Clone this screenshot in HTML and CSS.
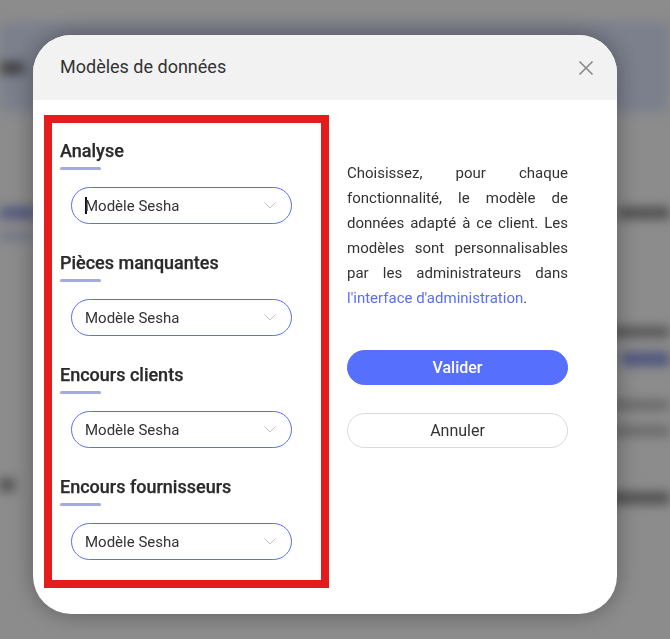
FILE: index.html
```html
<!DOCTYPE html>
<html>
<head>
    <title>Modèles de données</title>
    <link rel="stylesheet" href="styles.css">
</head>
<body>
    <div class="page">
        <div class="topbar"></div>
        <div class="band">
            <span class="band-text"></span>
        </div>
        <div class="content">
            <div class="col-left">
                <span class="line blue l1"></span>
                <span class="line lightblue l2"></span>
                <span class="line dark l3"></span>
            </div>
            <div class="col-right">
                <span class="line dark r1"></span>
                <span class="line dark r2"></span>
                <span class="line blue r3"></span>
                <span class="line grey r4"></span>
                <span class="line grey r5"></span>
                <span class="line dark r6"></span>
            </div>
        </div>
    </div>

    <div class="overlay"></div>

    <div class="modal">
        <div class="modal-header">
            <h2>Modèles de données</h2>
            <button class="close" aria-label="Fermer">
                <svg width="16" height="16" viewBox="0 0 16 16">
                    <path d="M1.5 1.5 L14.5 14.5 M14.5 1.5 L1.5 14.5" stroke="#888" stroke-width="1.6" fill="none"/>
                </svg>
            </button>
        </div>
        <div class="modal-body">
            <div class="models">
                <div class="model">
                    <h3>Analyse</h3>
                    <div class="select">
                        <span><span class="caret"></span>Modèle Sesha</span>
                        <svg class="chevron" width="12" height="7" viewBox="0 0 12 7"><path d="M0.5 0.5 L6 6 L11.5 0.5" stroke="#c2c2c2" stroke-width="1" fill="none"/></svg>
                    </div>
                </div>
                <div class="model">
                    <h3>Pièces manquantes</h3>
                    <div class="select">
                        <span>Modèle Sesha</span>
                        <svg class="chevron" width="12" height="7" viewBox="0 0 12 7"><path d="M0.5 0.5 L6 6 L11.5 0.5" stroke="#c2c2c2" stroke-width="1" fill="none"/></svg>
                    </div>
                </div>
                <div class="model">
                    <h3>Encours clients</h3>
                    <div class="select">
                        <span>Modèle Sesha</span>
                        <svg class="chevron" width="12" height="7" viewBox="0 0 12 7"><path d="M0.5 0.5 L6 6 L11.5 0.5" stroke="#c2c2c2" stroke-width="1" fill="none"/></svg>
                    </div>
                </div>
                <div class="model">
                    <h3>Encours fournisseurs</h3>
                    <div class="select">
                        <span>Modèle Sesha</span>
                        <svg class="chevron" width="12" height="7" viewBox="0 0 12 7"><path d="M0.5 0.5 L6 6 L11.5 0.5" stroke="#c2c2c2" stroke-width="1" fill="none"/></svg>
                    </div>
                </div>
            </div>

            <div class="side">
                <p>Choisissez, pour chaque fonctionnalité, le modèle de données adapté à ce client. Les modèles sont personnalisables par les administrateurs dans <a href="#">l'interface d'administration</a>.</p>
                <button class="btn primary">Valider</button>
                <button class="btn">Annuler</button>
            </div>
        </div>
    </div>
</body>
</html>
```

FILE: styles.css
```css
body {
    margin: 0;
    font-family: Roboto, "Liberation Sans", sans-serif;
    color: #333;
    background-color: #fff;
    overflow: hidden;
}

/* blurred page behind the dialog */
.page {
    height: 639px;
    filter: blur(6px);
}

.topbar {
    height: 22px;
    background-color: #fff;
}

.band {
    height: 90px;
    background-color: #e0e9ff;
    padding-top: 41px;
    box-sizing: border-box;
}

.band-text {
    display: block;
    width: 24px;
    height: 10px;
    background-color: #555;
}

.content {
    display: flex;
    justify-content: space-between;
}

.col-left,
.col-right {
    display: flex;
    flex-direction: column;
}

.col-left {
    width: 34px;
}

.col-right {
    width: 60px;
    align-items: flex-end;
}

.line {
    display: block;
    height: 8px;
}

.dark { background-color: #777; }
.grey { background-color: #aaa; }
.blue { background-color: #7d8be0; }
.lightblue { background-color: #b5c0f0; }

.l1 { margin-top: 96px; width: 36px; height: 10px; }
.l2 { margin-top: 15px; width: 32px; height: 6px; }
.l3 { margin-top: 240px; width: 14px; height: 12px; }

.r1 { margin-top: 96px; width: 52px; height: 10px; }
.r2 { margin-top: 110px; width: 60px; }
.r3 { margin-top: 17px; width: 48px; height: 12px; }
.r4 { margin-top: 36px; width: 60px; }
.r5 { margin-top: 18px; width: 60px; }
.r6 { margin-top: 58px; width: 60px; height: 10px; }

.overlay {
    position: fixed;
    inset: 0;
    background-color: rgba(0, 0, 0, 0.45);
}

/* dialog */
.modal {
    position: fixed;
    left: 33px;
    top: 35px;
    width: 584px;
    height: 579px;
    background-color: #fff;
    border-radius: 38px;
    overflow: hidden;
    box-shadow: 0px 0px 24px rgba(0, 0, 0, 0.35);
}

.modal-header {
    height: 65px;
    background-color: #f2f2f2;
    display: flex;
    align-items: center;
    justify-content: space-between;
    padding: 0 23px 0 27px;
}

.modal-header h2 {
    margin: 0;
    font-size: 18px;
    line-height: 20px;
    padding-bottom: 2px;
    font-weight: 400;
    color: #333;
}

.close {
    background: none;
    border: none;
    padding: 0;
    width: 16px;
    height: 16px;
    cursor: pointer;
}

.modal-body {
    display: flex;
    gap: 18px;
    padding: 15px 49px 26px 11px;
}

.models {
    width: 285px;
    height: 473px;
    box-sizing: border-box;
    border: 8px solid #e41c1c;
    padding: 17px 0 0 8px;
    display: flex;
    flex-direction: column;
    gap: 28px;
}

.model h3 {
    margin: 0;
    font-size: 18px;
    line-height: 21px;
    font-weight: 500;
    color: #2a2a2a;
    -webkit-text-stroke: 0.25px #2a2a2a;
}

.model h3::after {
    content: "";
    display: block;
    width: 41px;
    height: 3px;
    margin-top: 6px;
    border-radius: 2px;
    background-color: #a4abdf;
}

.select {
    margin: 17px 0 0 11px;
    width: 221px;
    height: 37px;
    box-sizing: border-box;
    border: 1px solid #5a6ff0;
    border-radius: 19px;
    display: flex;
    align-items: center;
    justify-content: space-between;
    padding: 0 15px 0 13px;
    font-size: 15px;
}

.caret {
    display: inline-block;
    width: 2px;
    height: 17px;
    background-color: #111;
    vertical-align: -3px;
    margin-right: -2px;
}

.side {
    width: 221px;
    padding-top: 46px;
    display: flex;
    flex-direction: column;
}

.side p {
    margin: 0;
    font-size: 15px;
    line-height: 25px;
    text-align: justify;
}

.side a {
    color: #5b6ef6;
    text-decoration: none;
}

.btn {
    height: 35px;
    border-radius: 18px;
    border: 1px solid #d9d9d9;
    background-color: #fff;
    font-family: Roboto, "Liberation Sans", sans-serif;
    font-size: 16px;
    color: #333;
    margin-top: 28px;
    cursor: pointer;
}

.btn.primary {
    margin-top: 39px;
    background-color: #566ffd;
    border-color: #566ffd;
    color: #fff;
    font-weight: 500;
}
```
